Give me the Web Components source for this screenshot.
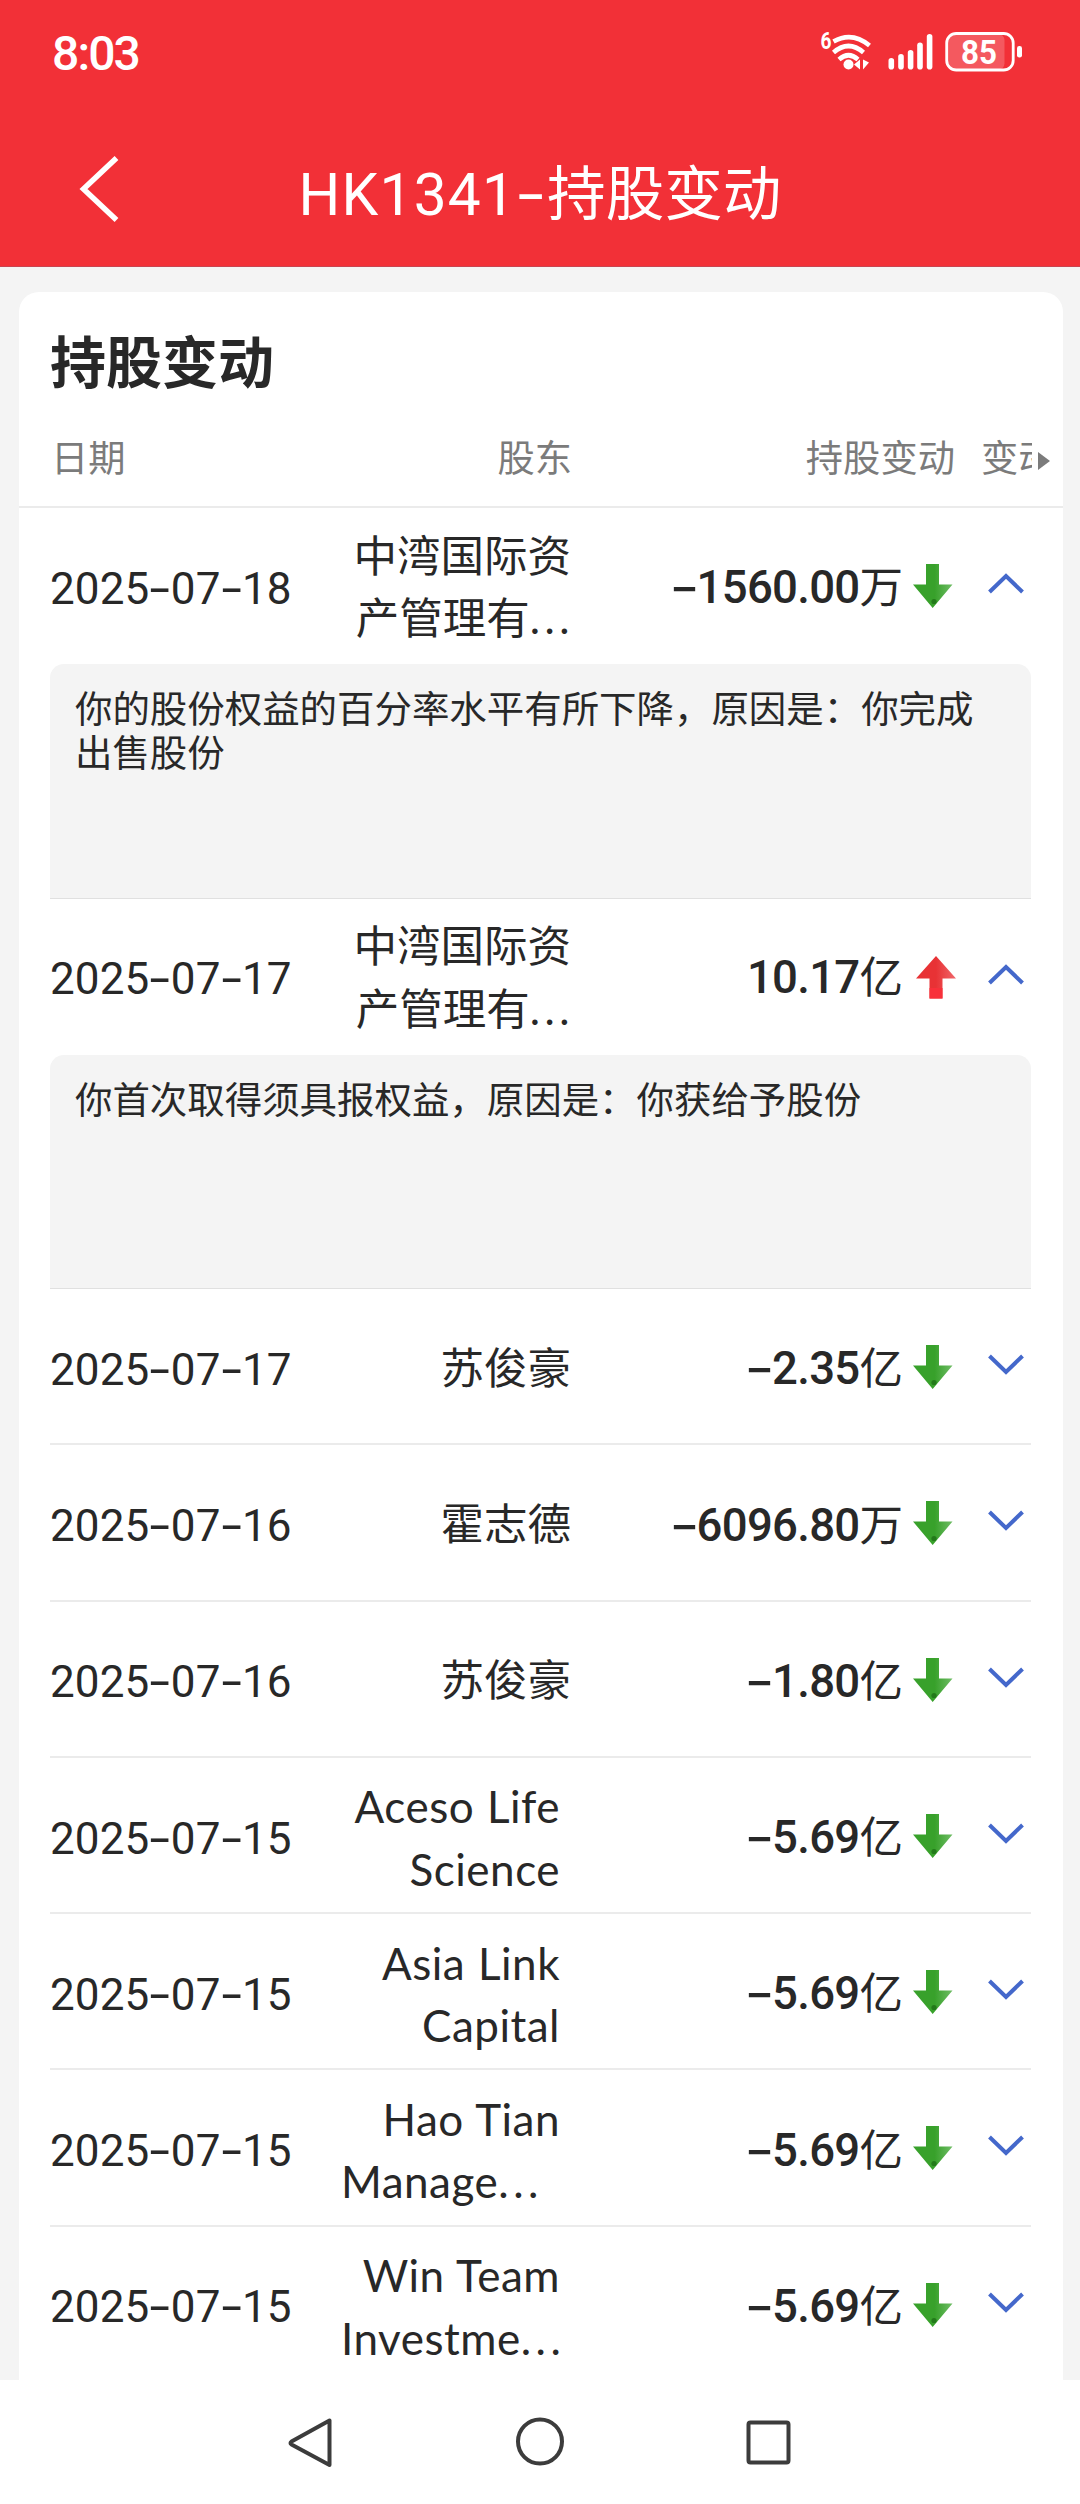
<!DOCTYPE html>
<html lang="zh-CN">
<head>
<meta charset="utf-8">
<title>HK1341-持股变动</title>
<style>
  body {
    margin: 0;
    width: 1080px;
    height: 2504px;
    overflow: hidden;
    display: flex;
    flex-direction: column;
    background-color: #f4f4f4;
    color: #282828;
    font-family: Roboto, 'Noto Sans CJK SC', sans-serif;
  }

  main {
    flex: 1;
    min-height: 0;
    overflow: hidden;
    padding: 25px 17px 0 19px;
  }

  .code {
    letter-spacing: 1.2px;
  }

  .code i {
    display: inline-block;
    width: 31px;
    text-align: center;
    font-style: normal;
    font-family: Inter, sans-serif;
    transform: scaleX(1.2);
  }
</style>
</head>
<body>
  <app-header time="8:03" battery="85"><span class="code">HK1341<i>-</i></span>持股变动</app-header>
  <main>
    <holding-card>
      <span slot="title">持股变动</span>
      <holding-row date="2025-07-18" holder="中湾国际资|产管理有..." amount="-1560.00" unit="万" open>你的股份权益的百分率水平有所下降，原因是：你完成出售股份</holding-row>
      <holding-row date="2025-07-17" holder="中湾国际资|产管理有..." amount="10.17" unit="亿" open>你首次取得须具报权益，原因是：你获给予股份</holding-row>
      <holding-row date="2025-07-17" holder="苏俊豪" amount="-2.35" unit="亿"></holding-row>
      <holding-row date="2025-07-16" holder="霍志德" amount="-6096.80" unit="万"></holding-row>
      <holding-row date="2025-07-16" holder="苏俊豪" amount="-1.80" unit="亿"></holding-row>
      <holding-row date="2025-07-15" holder="Aceso Life|Science" amount="-5.69" unit="亿"></holding-row>
      <holding-row date="2025-07-15" holder="Asia Link|Capital" amount="-5.69" unit="亿"></holding-row>
      <holding-row date="2025-07-15" holder="Hao Tian|Manage..." amount="-5.69" unit="亿"></holding-row>
      <holding-row date="2025-07-15" holder="Win Team|Investme..." amount="-5.69" unit="亿"></holding-row>
    </holding-card>
  </main>
  <nav-bar></nav-bar>

<script>
// Wide dash between the digits
const dash = (text) => text.replace(/-/g, '<i>-</i>');

class AppHeader extends HTMLElement {
  constructor() {
    super();
    this.shadowDOM = this.attachShadow({ mode: 'open' });
  }

  connectedCallback() {
    this.render();
  }

  render() {
    this.shadowDOM.innerHTML = `
    <style>
      :host {
        display: block;
        box-sizing: border-box;
        height: 267px;
        background-color: #f23037;
        border-bottom: 1px solid #c9434f;
        color: #fff;
      }

      .status {
        display: flex;
        justify-content: space-between;
        height: 106px;
        padding: 0 56px 0 52px;
      }

      .time {
        font-size: 48px;
        font-weight: 500;
        line-height: 107px;
        letter-spacing: -1.9px;
      }

      .icons {
        display: block;
        width: 206px;
        height: 106px;
      }

      .bar {
        display: grid;
        grid-template-columns: 160px 1fr 160px;
        align-items: center;
        height: 160px;
      }

      .back {
        display: block;
        width: 44px;
        height: 76px;
        margin: 6px 0 0 78px;
      }

      .title {
        font-size: 58.6px;
        line-height: 80px;
        padding-top: 16px;
        text-align: center;
        white-space: nowrap;
      }
    </style>

    <div class="status">
      <span class="time">${this.getAttribute('time')}</span>
      <svg class="icons" viewBox="818 0 206 106" fill="#fff">
        <text x="820.5" y="49" font-size="23" font-weight="700" textLength="11" lengthAdjust="spacingAndGlyphs">6</text>
        <g fill="none" stroke="#fff" stroke-width="4.6">
          <path d="M833.5 41.5 Q852 31 869.5 45.5"/>
          <path d="M833.5 52.5 Q848.5 39.5 863.5 52.5"/>
          <path d="M839 59.5 Q848.5 51 858 59.5"/>
        </g>
        <circle cx="848.5" cy="64.5" r="5"/>
        <path d="M854 64.5 L860 59.5 V69.5 Z M863 59.5 V69.5 L869 62.5 Z"/>
        <rect x="888.5" y="58" width="5.6" height="11.5" rx="2.8"/>
        <rect x="898.2" y="54" width="5.6" height="15.5" rx="2.8"/>
        <rect x="907.8" y="50" width="5.6" height="19.5" rx="2.8"/>
        <rect x="917.2" y="42.5" width="5.6" height="27" rx="2.8"/>
        <rect x="926.8" y="34" width="5.6" height="35.5" rx="2.8"/>
        <rect x="947" y="34" width="57.5" height="35.5" rx="6" opacity=".2"/>
        <rect x="946.7" y="33.5" width="66.5" height="36.5" rx="9.5" fill="none" stroke="#fff" stroke-width="2.8"/>
        <rect x="1017" y="46" width="5" height="11.5" rx="2.3"/>
        <text x="961" y="64" font-size="33" font-weight="700" textLength="36" lengthAdjust="spacingAndGlyphs">${this.getAttribute('battery')}</text>
      </svg>
    </div>
    <div class="bar">
      <svg class="back" viewBox="0 0 44 76" fill="none" stroke="#fff" stroke-width="5.5">
        <path d="M38.5 7 L5.5 38 L38.5 69"/>
      </svg>
      <div class="title"><slot></slot></div>
    </div>
    `;
  }
}

class HoldingCard extends HTMLElement {
  constructor() {
    super();
    this.shadowDOM = this.attachShadow({ mode: 'open' });
  }

  connectedCallback() {
    this.render();
  }

  render() {
    this.shadowDOM.innerHTML = `
    <style>
      :host {
        display: block;
        background-color: #fff;
        border-radius: 20px 20px 0 0;
      }

      h2 {
        margin: 0;
        padding: 32px 31px 0;
        height: 104px;
        font-size: 56px;
        font-weight: 700;
        line-height: 80px;
      }

      .head {
        display: grid;
        grid-template-columns: 222px 299px 383px 26px 51px 1fr;
        align-items: center;
        height: 78px;
        padding-left: 32px;
        border-bottom: 2px solid #ebebeb;
        font-size: 37.3px;
        color: #7b7b7b;
        white-space: nowrap;
      }

      .head span {
        padding-bottom: 16px;
        line-height: 50px;
        text-align: right;
      }

      .head .first,
      .head .next {
        text-align: left;
      }

      .head .next {
        overflow: hidden;
      }

      .more {
        width: 12px;
        height: 20px;
        margin: 0 0 13px 6px;
      }

      .rows {
        padding: 0 32px 0 31px;
      }
    </style>

    <h2><slot name="title"></slot></h2>
    <div class="head">
      <span class="first">日期</span>
      <span>股东</span>
      <span>持股变动</span>
      <i></i>
      <span class="next">变动</span>
      <svg class="more" viewBox="0 0 12 20" fill="#7b7b7b"><path d="M0 1 L12 10 L0 19 Z"/></svg>
    </div>
    <div class="rows"><slot></slot></div>
    `;
  }
}

class HoldingRow extends HTMLElement {
  constructor() {
    super();
    this.shadowDOM = this.attachShadow({ mode: 'open' });
  }

  connectedCallback() {
    this.render();
  }

  get isDown() {
    return this.getAttribute('amount').startsWith('-');
  }

  holderLines() {
    return this.getAttribute('holder').split('|').map((line) => {
      const latin = /^[A-Z]/.test(line);
      const cut = line.endsWith('...');
      const text = line.replace('...', '<b>...</b>');
      return `<span class="${latin ? 'latin' : ''} ${latin && cut ? 'cut' : ''}">${text}</span>`;
    }).join('');
  }

  arrow() {
    if (this.isDown) {
      return `
      <svg class="arrow" viewBox="0 0 44 46">
        <defs><linearGradient id="g"><stop offset=".55" stop-color="#38a12b"/><stop offset="1" stop-color="#6fbd65"/></linearGradient></defs>
        <path fill="url(#g)" d="M14 1 H27 V21.5 H40.5 L20.7 45 L1 21.5 H14 Z"/>
        <circle cx="22" cy="38.5" r="2.6" fill="#237a1a"/>
      </svg>`;
    }
    return `
      <svg class="arrow" viewBox="0 0 44 46">
        <defs><linearGradient id="g"><stop offset=".5" stop-color="#e83235"/><stop offset="1" stop-color="#f0686b"/></linearGradient></defs>
        <path fill="url(#g)" d="M17.5 44.5 H30.5 V24.5 H44 L24 2 L4 24.5 H17.5 Z"/>
        <path fill="#f8303a" d="M17.5 34 H30.5 V44.5 H17.5 Z"/>
      </svg>`;
  }

  render() {
    const open = this.hasAttribute('open');
    this.shadowDOM.innerHTML = `
    <style>
      :host {
        display: block;
      }

      .row {
        display: grid;
        grid-template-columns: 250px 271px 331px 53px 1fr;
        align-items: center;
        box-sizing: border-box;
        height: 156.25px;
        border-bottom: 2px solid #ebebeb;
        font-size: 43.5px;
        line-height: 62.5px;
        white-space: nowrap;
      }

      :host([open]) .row {
        border-bottom-color: transparent;
      }

      i {
        display: inline-block;
        width: 21.5px;
        text-align: center;
        font-style: normal;
        font-family: Inter, sans-serif;
        transform: scaleX(1.25);
      }

      .date {
        padding-top: 7px;
        font-size: 44px;
        letter-spacing: .1px;
      }

      .holder {
        display: flex;
        flex-direction: column;
        padding-top: 8px;
        text-align: right;
      }

      .holder span {
        height: 62.5px;
      }

      .holder b {
        font-weight: 400;
        font-family: Lato, sans-serif;
        line-height: 0;
        letter-spacing: 4.5px;
        margin-right: -3px;
      }

      .holder .latin {
        position: relative;
        top: -1px;
        font-family: Lato, sans-serif;
        font-size: 44px;
        letter-spacing: .5px;
        word-spacing: 1px;
        padding-right: 11px;
      }

      .holder .cut {
        text-align: left;
        padding: 0 0 0 41px;
      }

      .amount {
        padding-top: 7px;
        text-align: right;
        margin-right: -1px;
      }

      .amount strong {
        font-size: 45.5px;
        font-weight: 500;
        letter-spacing: -.7px;
      }

      .amount i {
        width: 26px;
        transform: scaleX(1.45);
      }

      .arrow {
        width: 44px;
        height: 46px;
        margin: 2px 0 0 10px;
      }

      .chevron {
        width: 40px;
        height: 24px;
        margin: 0 0 2px 31px;
      }

      .note {
        box-sizing: border-box;
        height: 234.25px;
        padding: 24px 25px 0 25px;
        background-color: #f4f4f4;
        border-bottom: 1.5px solid #e0e0e0;
        border-radius: 14px 14px 0 0;
        font-size: 37.45px;
        line-height: 44px;
      }
    </style>

    <div class="row">
      <span class="date">${dash(this.getAttribute('date'))}</span>
      <div class="holder">${this.holderLines()}</div>
      <span class="amount"><strong>${dash(this.getAttribute('amount'))}</strong>${this.getAttribute('unit')}</span>
      ${this.arrow()}
      <svg class="chevron" viewBox="0 0 40 24" fill="none" stroke="#4468cb" stroke-width="4">
        <path d="${open ? 'M3.5 20 L20 4 L36.5 20' : 'M3.5 3 L20 19 L36.5 3'}"/>
      </svg>
    </div>
    ${open ? '<div class="note"><slot></slot></div>' : ''}
    `;
  }
}

class NavBar extends HTMLElement {
  constructor() {
    super();
    this.shadowDOM = this.attachShadow({ mode: 'open' });
  }

  connectedCallback() {
    this.render();
  }

  render() {
    this.shadowDOM.innerHTML = `
    <style>
      :host {
        display: flex;
        align-items: center;
        justify-content: center;
        gap: 178px;
        height: 124px;
        background-color: #fff;
      }

      svg {
        width: 52px;
        height: 52px;
        fill: none;
        stroke: #3c3c3c;
        stroke-width: 4;
        stroke-linejoin: round;
      }
    </style>

    <svg viewBox="0 0 52 52"><path d="M45.5 4.5 V49 L7.500 28.5 Q5.500 27 7.500 25.5 Z"/></svg>
    <svg viewBox="0 0 52 52"><circle cx="26" cy="25.5" r="22"/></svg>
    <svg viewBox="0 0 52 52"><rect x="4.500" y="6.500" width="40" height="40" rx="2"/></svg>
    `;
  }
}

customElements.define('app-header', AppHeader);
customElements.define('holding-card', HoldingCard);
customElements.define('holding-row', HoldingRow);
customElements.define('nav-bar', NavBar);
</script>
</body>
</html>
